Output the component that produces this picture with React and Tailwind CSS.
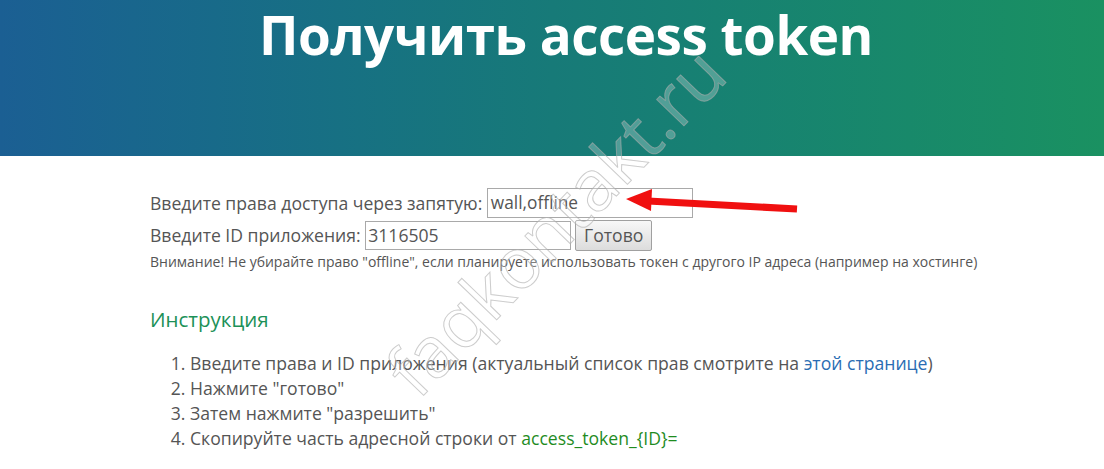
import React from "react";

export default function App() {
  return (
    <div className="relative w-[1104px] h-[469px] overflow-hidden bg-white font-['Open_Sans',sans-serif] text-[#555]">
      <header className="h-[156px] bg-gradient-to-r from-[#1b5f93] via-[#177a78] to-[#1a9161] pl-[28px]">
        <h1 className="text-center text-white font-bold text-[53px] leading-none pt-[8px] tracking-[-0.5px]">
          Получить access token
        </h1>
      </header>

      <main className="pl-[150px] pt-[32px]">
        <div className="flex items-center h-[30px] text-[17.6px]">
          <span>Введите права доступа через запятую:&nbsp;</span>
          <div className="w-[206px] h-[30px] border border-[#a9a9a9] flex items-center px-[3px] text-[17.3px]">wall,offline</div>
        </div>
        <div className="flex items-center h-[31px] mt-[2px] text-[17.6px]">
          <span>Введите ID приложения:&nbsp;</span>
          <div className="w-[206px] h-[29px] border border-[#a9a9a9] flex items-center px-[2px] text-[17.6px]">3116505</div>
          <div className="ml-[4px] w-[77px] h-[31px] border border-[#a0a0a0] rounded-[2px] bg-gradient-to-b from-[#f8f8f8] to-[#dcdcdc] flex items-center justify-center text-[17.6px]">Готово</div>
        </div>
        <p className="text-[14px] leading-[20px] mt-[1px]">
          Внимание! Не убирайте право "offline", если планируете использовать токен с другого IP адреса (например на хостинге)
        </p>

        <h2 className="text-[#1c9158] text-[20.5px] leading-[30px] mt-[32px]">Инструкция</h2>

        <ol className="list-decimal pl-[40px] mt-[17px] text-[17.6px] leading-[25px]">
          <li>Введите права и ID приложения (актуальный список прав смотрите на <span className="text-[#2a6db3]">этой странице</span>)</li>
          <li>Нажмите "готово"</li>
          <li>Затем нажмите "разрешить"</li>
          <li>Скопируйте часть адресной строки от <span className="text-[#1f8c1f]">access_token_{"{ID}"}=</span></li>
        </ol>
      </main>

      <svg className="absolute left-0 top-0 pointer-events-none" width="1104" height="469">
        <line x1="797" y1="209" x2="648" y2="201" stroke="#f01010" strokeWidth="7" strokeLinecap="butt" />
        <polygon points="626,199 652,189 651,211" fill="#f01010" />
      </svg>

      <div className="absolute left-[330px] top-[185px] rotate-[-46deg] origin-center pointer-events-none text-[71px] leading-none whitespace-nowrap text-[rgba(255,255,255,0.25)] [-webkit-text-stroke:1px_rgba(170,170,170,0.6)] font-['Open_Sans',sans-serif]">
        faqkontakt.ru
      </div>
    </div>
  );
}
